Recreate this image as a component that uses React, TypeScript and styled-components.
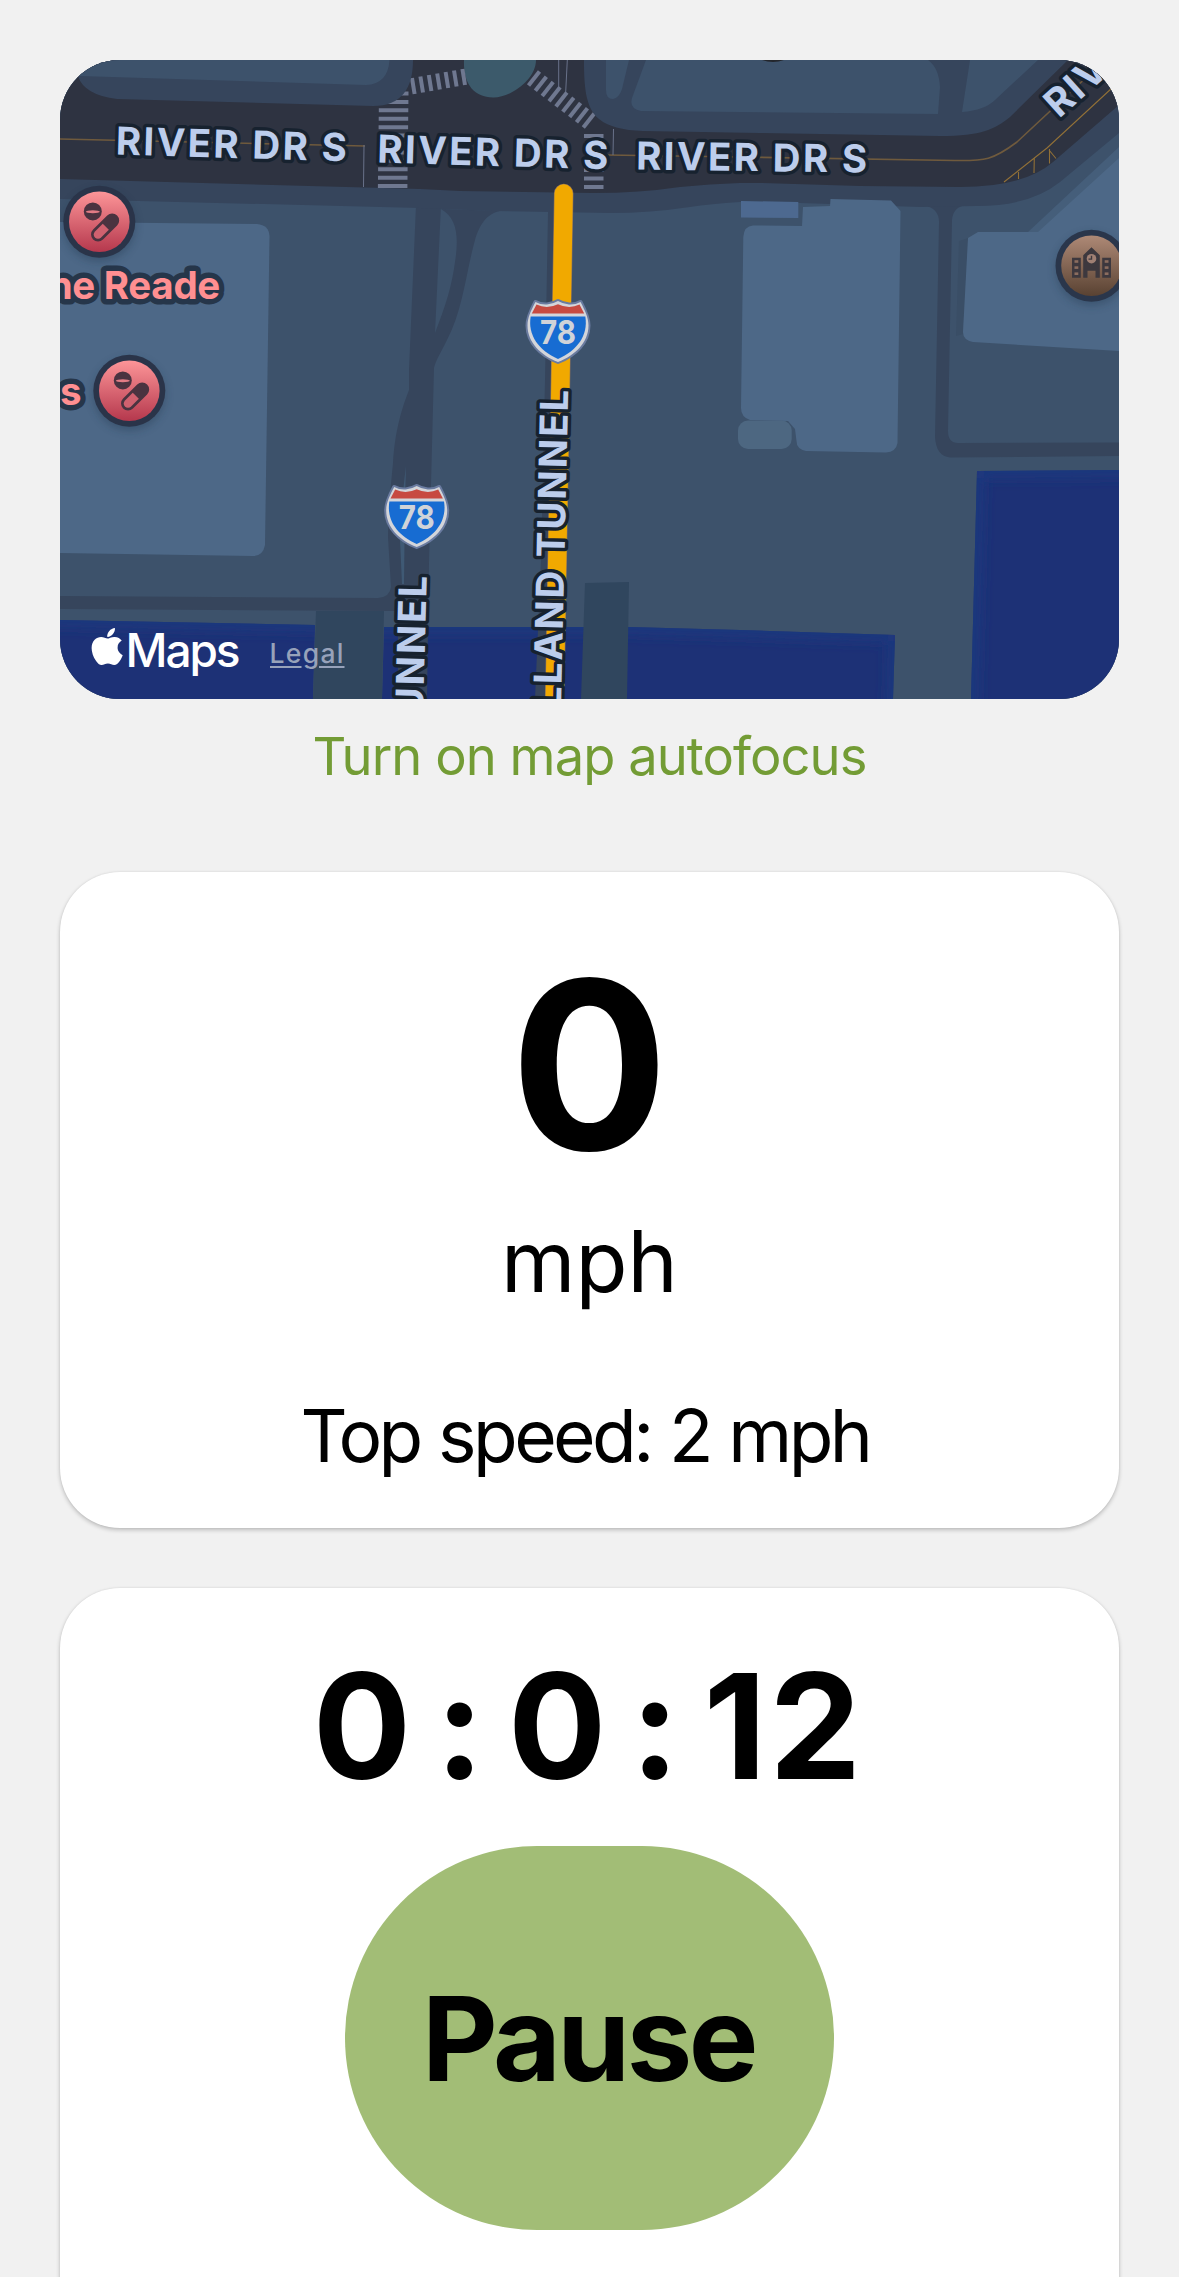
import React from "react";
import styled, { createGlobalStyle } from "styled-components";
import { FaApple } from "react-icons/fa";

const GlobalStyle = createGlobalStyle`
  *, *::before, *::after { box-sizing: border-box; }
  html, body { margin: 0; background: #f1f1f1; }
  body {
    font-family: Inter, "Liberation Sans", sans-serif;
    color: #000;
    height: 2277px;
    overflow: hidden;
  }
`;

const Screen = styled.main`
  display: flex;
  flex-direction: column;
  align-items: stretch;
  height: 2277px;
  padding: 60px 60px 0;
  overflow: hidden;
  background: #f1f1f1;
`;

const MapFrame = styled.section`
  flex: none;
  height: 639px;
  border-radius: 60px;
  overflow: hidden;
  background: #3d526b;
`;

const MapCanvas = styled.svg`
  display: block;
  width: 100%;
  height: 100%;
  font-family: Inter, "Liberation Sans", sans-serif;
`;

const StreetLabel = styled.text`
  font-size: 38.5px;
  font-weight: 700;
  fill: #bccdec;
  stroke: #17222f;
  stroke-width: 7px;
  stroke-linejoin: round;
  paint-order: stroke;
`;

const PlaceLabel = styled.text`
  font-size: 38.5px;
  font-weight: 700;
  fill: #ff8f91;
  stroke: #26364a;
  stroke-width: 11px;
  stroke-linejoin: round;
  paint-order: stroke;
  text-anchor: end;
`;

const AutofocusButton = styled.button`
  flex: none;
  height: 173px;
  padding: 0 0 59px;
  border: 0;
  background: none;
  color: #739c35;
  font: 400 52.5px/64px Inter, "Liberation Sans", sans-serif;
  letter-spacing: -0.95px;
`;

const Card = styled.section<{ $height: number }>`
  flex: none;
  display: flex;
  flex-direction: column;
  align-items: center;
  height: ${(p) => p.$height}px;
  border-radius: 60px;
  background: #fff;
  box-shadow: 0 2px 4px rgba(0, 0, 0, 0.22), 0 0 2px rgba(0, 0, 0, 0.08);

  & + & { margin-top: 60px; }
`;

const Line = styled.div<{ $size: number; $height: number; $bold?: boolean; $track?: number; $word?: number; $top?: number; $end?: number }>`
  font-size: ${(p) => p.$size}px;
  line-height: ${(p) => p.$height}px;
  font-weight: ${(p) => (p.$bold ? 700 : 400)};
  letter-spacing: ${(p) => p.$track ?? 0}px;
  word-spacing: ${(p) => p.$word ?? 0}px;
  margin-top: ${(p) => p.$top ?? 0}px;
  padding-right: ${(p) => p.$end ?? 0}px;
  white-space: pre;
`;

const Timer = styled(Line)`
  font-feature-settings: "calt" 0;
`;

const PauseButton = styled.button`
  width: 489px;
  height: 384px;
  margin-top: 32px;
  padding: 2px 2px 0 0;
  border: 0;
  border-radius: 192px;
  background: #a2bd76;
  color: #000;
  font: 700 117px/140px Inter, "Liberation Sans", sans-serif;
  letter-spacing: -3.5px;
`;

const range = (n: number) => Array.from({ length: n }, (_, i) => i);

function Shield({ x, y }: { x: number; y: number }) {
  const body =
    "M-22.5 -29.5 Q-17 -26.5 -11 -27 Q-5 -27.5 0 -30.5 Q5 -27.5 11 -27 Q17 -26.5 22.5 -29.5 C27 -21 30.5 -14 30.5 -6 C30.5 11 17 24 0 30.5 C-17 24 -30.5 11 -30.5 -6 C-30.5 -14 -27 -21 -22.5 -29.5Z";
  return (
    <g transform={`translate(${x} ${y})`}>
      <path d={body} fill="#d3d5da" stroke="#6a7ba0" strokeWidth="4" strokeLinejoin="round" />
      <path d={body} fill="#d3d5da" />
      <path d="M-21.5 -27 Q-11 -22 0 -27.3 Q11 -22 21.5 -27 L26.2 -18 H-26.2Z" fill="#c74a41" />
      <path d="M-27.3 -15 H27.3 C30.5 4 19 19 0 27.5 C-19 19 -30.5 4 -27.3 -15Z" fill="#176cd2" />
      <text x="0" y="12.8" fontSize="32" fontWeight="700" fill="#d0d3d8" textAnchor="middle" textLength="36" lengthAdjust="spacingAndGlyphs">78</text>
    </g>
  );
}

function Pharmacy({ x, y }: { x: number; y: number }) {
  return (
    <g transform={`translate(${x} ${y})`}>
      <circle r="36" cy="4" fill="#1f3046" opacity="0.35" filter="url(#soft)" />
      <circle r="36" fill="#2a3449" />
      <circle r="30.3" fill="url(#rose)" />
      <circle cx="-6.5" cy="-10.3" r="9" fill="#4a3340" />
      <ellipse cx="-6.5" cy="-10" rx="7" ry="1.5" fill="#e27c85" />
      <g transform="translate(5.8 5.8) rotate(-45)">
        <rect x="-17" y="-7" width="34" height="14" rx="7" fill="#4a3340" />
        <path d="M1 -4.3 H-10 A4.3 4.3 0 0 0 -10 4.3 H1Z" fill="#d0616f" />
      </g>
    </g>
  );
}

function School({ x, y }: { x: number; y: number }) {
  return (
    <g transform={`translate(${x} ${y})`}>
      <circle r="36" cy="4" fill="#1f3046" opacity="0.35" filter="url(#soft)" />
      <circle r="36" fill="#2a364b" />
      <circle r="30.3" fill="url(#bronze)" />
      <path d="M0 -18.5 L8.3 -10.5 V12 H4 V5 H-4 V12 H-8.3 V-10.5Z M-19.5 -8 H-10.7 V12 H-19.5Z M10.7 -8 H19.5 V12 H10.7Z" fill="#3d383e" />
      <circle cy="-7" r="4.8" fill="#a08074" />
      <path d="M0 -10 V-6.6 H-3" fill="none" stroke="#3d383e" strokeWidth="1.4" />
      {[-15.1, 15.1].map((cx) =>
        [-4.3, 1.8, 7.9].map((cy) => <rect key={`${cx}${cy}`} x={cx - 1.9} y={cy - 1.2} width="3.8" height="2.6" fill="#8b6d5f" />)
      )}
    </g>
  );
}

function MapView() {
  return (
    <MapCanvas viewBox="60 60 1059 639" role="img" aria-label="Map">
      <defs>
        <linearGradient id="rose" x1="0" y1="0" x2="0" y2="1">
          <stop offset="0" stopColor="#fd9598" />
          <stop offset="1" stopColor="#b5384d" />
        </linearGradient>
        <linearGradient id="bronze" x1="0" y1="0" x2="0" y2="1">
          <stop offset="0" stopColor="#ae8976" />
          <stop offset="1" stopColor="#594232" />
        </linearGradient>
        <filter id="soft" x="-30%" y="-30%" width="160%" height="160%">
          <feGaussianBlur stdDeviation="4" />
        </filter>
        <filter id="edge" x="-20%" y="-20%" width="140%" height="140%">
          <feGaussianBlur stdDeviation="6" />
        </filter>
        <clipPath id="waterClip">
          <path d="M60 620 L315 625 L313 699 H60Z M384 627 L629 627 L740 630 L895 635 L893 699 H382Z M977 471 L1119 470 V699 H971Z" />
        </clipPath>
      </defs>

      <rect x="60" y="60" width="1059" height="639" fill="#3d526b" />

      {/* river */}
      <g clipPath="url(#waterClip)">
        <rect x="60" y="460" width="1059" height="240" fill="#1d3176" />
        <path d="M40 619.500 L330 625 M370 627 L629 627 L740 630 L895 635 L893 720 M971 720 L977 471 L1140 470" fill="none" stroke="#1b387e" strokeWidth="14" filter="url(#edge)" />
      </g>
      <path d="M316 611 H384 L382 699 H313Z" fill="#30465e" />
      <path d="M585 583 L629 582 L627 699 H581Z" fill="#30465e" />

      {/* side streets */}
      <g fill="#36455c">
        <path d="M60 596 L378 598 Q390 597 391 587 L388 537 C388 510 391 485 393 463 C395 430 402 408 409 390 V370 L416 205 H441 L435 333 C446 305 452 285 455 262 C459 236 457 218 441 209 L500 211 C484 214 478 230 475 240 C466 272 463 310 447 340 C440 354 436 360 434 368 L429 563 L427 699 H398 V611 L60 609Z" />
        <path d="M548 212 H556 L548 699 H535 L541 560 L545 380Z" />
        <path d="M923 205 Q939 208 939 222 L935 437 Q936 456 950 457.500 L1119 456 V442.500 L958 443 Q948 443 948 431 L952 220 Q953 207 966 205Z" />
      </g>
      <path d="M406 466 C403 490 400 520 400 540 L402 584 H404 L405 500Z" fill="#3f5974" />

      {/* avenue sidewalk */}
      <path d="M60 60 H1119 V133 L1060 182 Q1030 206 977 206 L920 207 L800 203 L740 202 Q710 204 690 207 Q650 213 610 213 L493 211 L420 208 L60 199Z" fill="#36455c" />

      {/* buildings */}
      <path d="M1028 232 H1040 L1119 160 V147Z" fill="#455e7a" />
      <path d="M959 241 L968 238 L963 334 L956 336Z" fill="#3a4e66" />
      <g fill="#4d6887">
        <path d="M60 222 L257 224 Q269 225 269.500 236 L265 545 Q263 556 253 556 L60 553Z" />
        <path d="M753 225.500 L802 226 L803 207 L830 206 L830.500 199 L891 200.500 L900.500 211 L897.500 443 Q896 452 886 452.500 L806 451 Q796.500 449 796.500 441 L795 429 L788 421 L750 420 Q741 417 741 408 L743.300 237 Q744 226 753 225.500Z" />
        <path d="M978 232 L1038 232 L1119 158 V351 L973 342 Q963 340 963 332 L968 238Z" />
      </g>
      <path d="M741 201 L798.300 202 V218 L741 217.500Z" fill="#4d6990" />
      <rect x="738" y="420.500" width="53.700" height="28.500" rx="10" fill="#4d6781" />

      {/* main avenue */}
      <path d="M60 60 H1119 V105 L1053 162 Q1024 187 960 187 L860 186 L760 183 L740 183 Q710 184 680 187 Q640 193 593 193 L460 191 L420 189 L60 179Z" fill="#2e3341" />
      <path d="M464 60 C463 84 474 97 493 97.500 C510 98 536 80 536 60Z" fill="#3c5a6b" />

      {/* crossings */}
      <g stroke="#6f7890" strokeWidth="4">
        {range(12).map((i) => (
          <path key={i} d={`M${379 - i * 0.1} ${93.500 + i * 8.420} h29.500`} />
        ))}
        {range(7).map((i) => (
          <path key={i} d={`M${412 + i * 8.400} ${78 - i * 1.500} l2.600 16`} />
        ))}
        {range(9).map((i) => (
          <path key={i} d={`M${528.500 + i * 6.850} ${85.500 + i * 5.250} l11 -14`} />
        ))}
        {range(7).map((i) => (
          <path key={i} d={`M584 ${136 + i * 8.500} h19.500`} />
        ))}
      </g>

      <g fill="#36455c">
        <path d="M60 60 H413 C413 88 402 106 373 106 L117 99 Q84 95 78 76Z" />
        <path d="M584 60 C584 84 585 108 599 119 Q612 130 643 131 L760 133 L940 136 C982 136 995 129 1010 117 L1068 60Z" />
      </g>
      <g fill="#3d526b">
        <path d="M60 60 H389.500 Q388 84 366 85 L80 76 H60Z" />
        <path d="M606 60 V90 Q606 99 613 99 Q619 98 622 89 L629 60Z" />
        <path d="M646 60 L632 98 Q629 109 641 111 L938 114 L940 87 Q939 68 928 60Z" />
        <path d="M970 60 L962 112 Q985 110 995 100 L1038 60Z" />
      </g>

      {/* lane markings */}
      <g fill="none" stroke="#6f5a3d" strokeWidth="1.600">
        <path d="M60 139 L365 146" />
        <path d="M607 155 L740 157 L955 160.500 C985 161 993 160 1017 142 L1105 60" />
      </g>
      <path d="M1004 182 L1047 148 L1112 88 M1018.500 172 V179 M1034.300 158 L1034 173 M1049.500 149 V163.500 M1049 150 L1056 158.500" fill="none" stroke="#917037" strokeWidth="1.100" />
      <path d="M364 145 L363.500 187 M558.700 60 V87 M567.300 60 L565.700 92 M613.500 129 L613 155" stroke="#69728a" strokeWidth="1" fill="none" />

      {/* route */}
      <path d="M563.700 193.500 L560.500 380 L554.500 710" fill="none" stroke="#8b705b" strokeWidth="19.500" strokeLinecap="round" />
      <path d="M563.700 193.500 L560.500 380 L554.500 710" fill="none" stroke="#f1a900" strokeWidth="18.300" strokeLinecap="round" />

      <StreetLabel transform="translate(115.500 154.500) rotate(1.700)" textLength="231">RIVER DR S</StreetLabel>
      <StreetLabel transform="translate(377 162.500) rotate(1.700)" textLength="231">RIVER DR S</StreetLabel>
      <StreetLabel transform="translate(636 169.500) rotate(0.800)" textLength="231">RIVER DR S</StreetLabel>
      <StreetLabel transform="translate(1059 119) rotate(-42)" letterSpacing="2">RIVER</StreetLabel>
      <StreetLabel transform="translate(561.200 699) rotate(-88.700)" x="311" textAnchor="end" letterSpacing="2">HOLLAND TUNNEL</StreetLabel>
      <StreetLabel transform="translate(423.500 699) rotate(-88.500)" x="125" textAnchor="end" letterSpacing="2">TUNNEL</StreetLabel>

      <Shield x={558} y={331.500} />
      <Shield x={416.700} y={516.500} />

      <PlaceLabel x="220" y="299" letterSpacing="-0.300">ne Reade</PlaceLabel>
      <PlaceLabel x="81.500" y="405">s</PlaceLabel>
      <Pharmacy x={99.300} y={221.700} />
      <Pharmacy x={129.300} y={390.700} />
      <School x={1091.500} y={265.700} />
      <circle cx="773" cy="31" r="31" fill="#23262c" />

      <FaApple x="86" y="625.400" size={42.300} color="#fff" />
      <text x="125.500" y="666.700" fontSize="46" fontWeight="500" fill="#fff" textLength="115">Maps</text>
      <text x="269.500" y="663" fontSize="26.500" fontWeight="500" fill="#97a2ba" textLength="74">Legal</text>
      <path d="M270 667 H301.500 M319 667 H344.500" stroke="#97a2ba" strokeWidth="2.200" />
    </MapCanvas>
  );
}

export default function App() {
  return (
    <>
      <GlobalStyle />
      <Screen>
        <MapFrame>
          <MapView />
        </MapFrame>
        <AutofocusButton>Turn on map autofocus</AutofocusButton>
        <Card $height={656}>
          <Line $size={234} $height={234} $bold $top={76}>0</Line>
          <Line $size={85} $height={100} $top={30}>mph</Line>
          <Line $size={73} $height={90} $top={79} $track={-3.6} $word={1.5} $end={9}>Top speed: 2 mph</Line>
        </Card>
        <Card $height={780}>
          <Timer $size={146} $height={176} $bold $top={50} $track={3} $word={-16.5} $end={2}>0 : 0 : 12</Timer>
          <PauseButton>Pause</PauseButton>
        </Card>
      </Screen>
    </>
  );
}
